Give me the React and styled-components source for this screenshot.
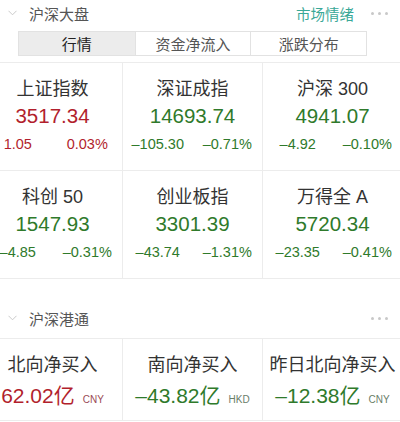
import React from "react";
import styled, { createGlobalStyle } from "styled-components";

const GlobalStyle = createGlobalStyle`
  html, body {
    margin: 0;
    padding: 0;
    background: #fff;
    font-family: "Liberation Sans", "Noto Sans CJK SC", sans-serif;
  }
`;

const RED = "#b21f2d";
const GREEN = "#2f7a2b";

const indexes = [
  { name: "上证指数", value: "3517.34", chg: "1.05", pct: "0.03%", up: true },
  { name: "深证成指", value: "14693.74", chg: "–105.30", pct: "–0.71%" },
  { name: "沪深 300", value: "4941.07", chg: "–4.92", pct: "–0.10%" },
  { name: "科创 50", value: "1547.93", chg: "–4.85", pct: "–0.31%" },
  { name: "创业板指", value: "3301.39", chg: "–43.74", pct: "–1.31%" },
  { name: "万得全 A", value: "5720.34", chg: "–23.35", pct: "–0.41%" },
];

const flows = [
  { name: "北向净买入", value: "62.02亿", unit: "CNY", up: true },
  { name: "南向净买入", value: "–43.82亿", unit: "HKD" },
  { name: "昨日北向净买入", value: "–12.38亿", unit: "CNY" },
];

const Chevron = () => (
  <svg width="9" height="6" viewBox="0 0 9 6">
    <path d="M0.5 0.8l4 4 4-4" fill="none" stroke="#c4c4c4" strokeWidth="0.9" />
  </svg>
);

const App = () => {
  return (
    <Page>
      <GlobalStyle />
      <SectionHead>
        <Chevron />
        <SectionTitle>沪深大盘</SectionTitle>
        <Spacer />
        <HeadLink>市场情绪</HeadLink>
        <More>
          <i />
          <i />
          <i />
        </More>
      </SectionHead>
      <Tabs>
        <Tab active>行情</Tab>
        <Tab>资金净流入</Tab>
        <Tab>涨跌分布</Tab>
      </Tabs>
      <Grid>
        {indexes.map((it) => (
          <Cell key={it.name}>
            <Name>{it.name}</Name>
            <Value up={it.up}>{it.value}</Value>
            <Sub up={it.up}>
              <span>{it.chg}</span>
              <span>{it.pct}</span>
            </Sub>
          </Cell>
        ))}
      </Grid>
      <Gap />
      <SectionHead>
        <Chevron />
        <SectionTitle>沪深港通</SectionTitle>
        <Spacer />
        <More>
          <i />
          <i />
          <i />
        </More>
      </SectionHead>
      <FlowGrid>
        {flows.map((f) => (
          <FlowCell key={f.name}>
            <Name>{f.name}</Name>
            <FlowValue up={f.up}>
              {f.value}
              <Unit up={f.up}>{f.unit}</Unit>
            </FlowValue>
          </FlowCell>
        ))}
      </FlowGrid>
    </Page>
  );
};

const Page = styled.div`
  width: 400px;
  height: 422px;
  overflow: hidden;
  background: #fff;
`;

const SectionHead = styled.div`
  display: flex;
  align-items: center;
  height: 26px;
  padding: 0 12px 0 8px;
`;

const SectionTitle = styled.div`
  margin-left: 12px;
  font-size: 15px;
  color: #555;
  font-family: "Noto Sans CJK SC", sans-serif;
`;

const Spacer = styled.div`
  flex: 1;
`;

const HeadLink = styled.div`
  font-size: 14.5px;
  color: #3aa897;
  font-family: "Noto Sans CJK SC", sans-serif;
  margin-right: 17px;
`;

const More = styled.div`
  display: flex;
  gap: 4px;
  i {
    width: 3px;
    height: 3px;
    border-radius: 50%;
    background: #c8c8c8;
  }
`;

const Tabs = styled.div`
  display: grid;
  grid-template-columns: repeat(3, 1fr);
  margin: 5px 33px 0 18px;
  border: 1px solid #e2e2e2;
  height: 23px;
`;

const Tab = styled.div`
  display: flex;
  align-items: center;
  justify-content: center;
  font-size: 15px;
  font-family: "Noto Sans CJK SC", sans-serif;
  color: ${(p) => (p.active ? "#222" : "#555")};
  background: ${(p) => (p.active ? "#ececec" : "#fff")};
  & + & {
    border-left: 1px solid #e2e2e2;
  }
`;

const Grid = styled.div`
  display: grid;
  grid-template-columns: repeat(3, 139px);
  gap: 1px;
  background: #ececec;
  margin: 6px 0 0 -17px;
  border-top: 1px solid #ececec;
  border-bottom: 1px solid #ececec;
`;

const Cell = styled.div`
  background: #fff;
  height: 107px;
  display: flex;
  flex-direction: column;
  align-items: center;
  padding-top: 16px;
  box-sizing: border-box;
`;

const Name = styled.div`
  font-size: 18px;
  color: #333;
  line-height: 20px;
  font-family: "Liberation Sans", "Noto Sans CJK SC", sans-serif;
`;

const Value = styled.div`
  margin-top: 4px;
  font-size: 20.5px;
  line-height: 26px;
  color: ${(p) => (p.up ? RED : GREEN)};
`;

const Sub = styled.div`
  margin-top: 7px;
  width: 100%;
  display: grid;
  grid-template-columns: 1fr 1fr;
  font-size: 14.5px;
  line-height: 17px;
  color: ${(p) => (p.up ? RED : GREEN)};
  span {
    text-align: center;
  }
`;

const Gap = styled.div`
  height: 26px;
`;

const FlowGrid = styled(Grid)`
  margin-top: 7px;
`;

const FlowCell = styled(Cell)`
  height: 81px;
  padding-top: 16px;
`;

const FlowValue = styled.div`
  margin-top: 8px;
  font-size: 21px;
  line-height: 26px;
  color: ${(p) => (p.up ? RED : GREEN)};
  white-space: nowrap;
  font-family: "Liberation Sans", "Noto Sans CJK SC", sans-serif;
`;

const Unit = styled.span`
  font-size: 10px;
  margin-left: 8px;
  color: ${(p) => (p.up ? "#9b4a55" : "#6a7d68")};
`;

export default App;
